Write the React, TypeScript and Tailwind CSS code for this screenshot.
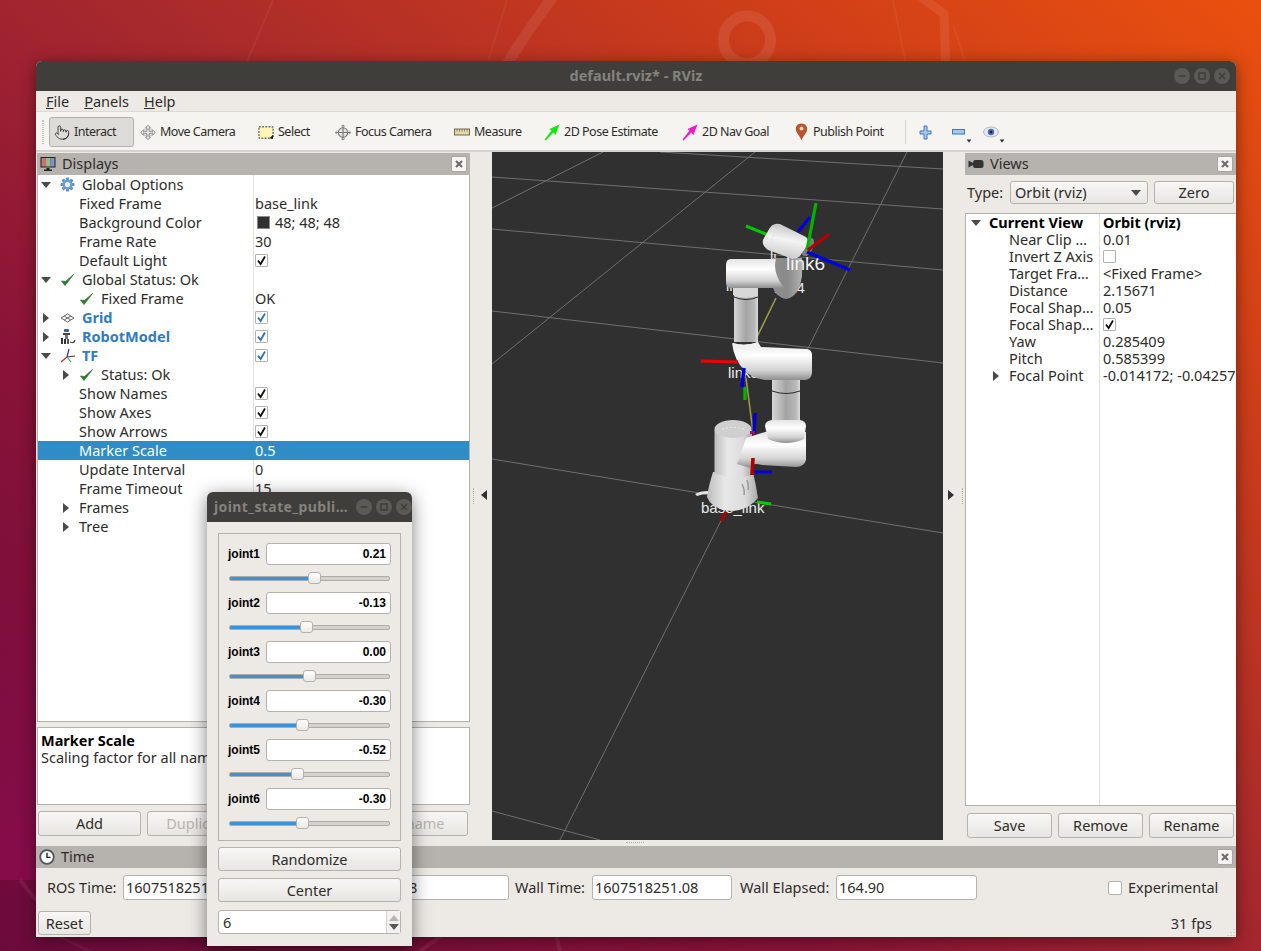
import React from "react";
import { Pointer } from "lucide-react";

type TreeRow = {
  label: string;
  indent: string;
  arrow?: "down" | "right";
  icon?: React.ReactNode;
  value?: string;
  check?: "black" | "blue" | "empty";
  swatch?: boolean;
  blue?: boolean;
  bold?: boolean;
  selected?: boolean;
};

function Tri({ dir, className = "" }: { dir: "down" | "right" | "left" | "up"; className?: string }) {
  const points = { down: "0,2 10,2 5,8", right: "2,0 8,5 2,10", left: "8,0 2,5 8,10", up: "0,8 10,8 5,2" }[dir];
  return (
    <svg width="10" height="10" viewBox="0 0 10 10" className={`shrink-0 ${className}`}>
      <polygon points={points} fill="currentColor" />
    </svg>
  );
}

function GreenTick() {
  return (
    <svg width="15" height="14" viewBox="0 0 15 14" className="shrink-0">
      <path d="M1.5 8 L5 12.5 L13.5 1.5 L5.5 8.5 Z" fill="#2a7a2e" stroke="#2a7a2e" strokeWidth="0.8" strokeLinejoin="round" />
    </svg>
  );
}

function Gear() {
  const teeth = [0, 45, 90, 135];
  return (
    <svg width="15" height="15" viewBox="0 0 15 15" className="shrink-0">
      {teeth.map((a) => (
        <rect key={a} x="6" y="0.5" width="3" height="14" rx="0.8" fill="#5c8fd0" transform={`rotate(${a} 7.5 7.5)`} />
      ))}
      <circle cx="7.5" cy="7.5" r="5" fill="#6d9dd8" />
      <circle cx="7.5" cy="7.5" r="2.6" fill="#e8f0fa" />
    </svg>
  );
}

function GridIcon() {
  return (
    <svg width="15" height="12" viewBox="0 0 15 12" className="shrink-0">
      <path d="M7.5 2 L14 6 L7.5 10 L1 6 Z M4.2 4 L10.8 8 M10.8 4 L4.2 8" fill="none" stroke="#555" strokeWidth="0.9" />
    </svg>
  );
}

function RobotIcon() {
  return (
    <svg width="16" height="17" viewBox="0 0 16 17" className="shrink-0">
      <rect x="4" y="1" width="5" height="3" rx="1" fill="#3f5f9a" />
      <rect x="3" y="5" width="7" height="2" fill="#444" />
      <rect x="5" y="7" width="3" height="4" fill="#777" />
      <rect x="1" y="10" width="2" height="6" fill="#333" />
      <rect x="4" y="11" width="2" height="5" fill="#333" />
      <rect x="7" y="11" width="2" height="5" fill="#555" />
      <path d="M10 14 Q14 16 15 12" fill="none" stroke="#444" strokeWidth="1.2" />
    </svg>
  );
}

function TfIcon() {
  return (
    <svg width="16" height="16" viewBox="0 0 16 16" className="shrink-0">
      <path d="M7 9 L9 1" stroke="#2030c8" strokeWidth="1.2" />
      <path d="M7 9 L1 14" stroke="#e02020" strokeWidth="1.2" />
      <path d="M7 9 L15 8" stroke="#333" strokeWidth="1" />
      <path d="M7 9 L11 14" stroke="#20b030" strokeWidth="1.2" />
    </svg>
  );
}

const displayRows: TreeRow[] = [
  { label: "Global Options", indent: "pl-[3px]", arrow: "down", icon: <Gear /> },
  { label: "Fixed Frame", indent: "pl-[41px]", value: "base_link" },
  { label: "Background Color", indent: "pl-[41px]", value: "48; 48; 48", swatch: true },
  { label: "Frame Rate", indent: "pl-[41px]", value: "30" },
  { label: "Default Light", indent: "pl-[41px]", check: "black" },
  { label: "Global Status: Ok", indent: "pl-[3px]", arrow: "down", icon: <GreenTick /> },
  { label: "Fixed Frame", indent: "pl-[41px]", icon: <GreenTick />, value: "OK" },
  { label: "Grid", indent: "pl-[3px]", arrow: "right", icon: <GridIcon />, check: "blue", blue: true },
  { label: "RobotModel", indent: "pl-[3px]", arrow: "right", icon: <RobotIcon />, check: "blue", blue: true },
  { label: "TF", indent: "pl-[3px]", arrow: "down", icon: <TfIcon />, check: "blue", blue: true },
  { label: "Status: Ok", indent: "pl-[23px]", arrow: "right", icon: <GreenTick /> },
  { label: "Show Names", indent: "pl-[41px]", check: "black" },
  { label: "Show Axes", indent: "pl-[41px]", check: "black" },
  { label: "Show Arrows", indent: "pl-[41px]", check: "black" },
  { label: "Marker Scale", indent: "pl-[41px]", value: "0.5", selected: true },
  { label: "Update Interval", indent: "pl-[41px]", value: "0" },
  { label: "Frame Timeout", indent: "pl-[41px]", value: "15" },
  { label: "Frames", indent: "pl-[23px]", arrow: "right" },
  { label: "Tree", indent: "pl-[23px]", arrow: "right" },
];

const viewRows: TreeRow[] = [
  { label: "Current View", indent: "pl-[5px]", arrow: "down", value: "Orbit (rviz)", bold: true },
  { label: "Near Clip …", indent: "pl-[43px]", value: "0.01" },
  { label: "Invert Z Axis", indent: "pl-[43px]", check: "empty" },
  { label: "Target Fra…", indent: "pl-[43px]", value: "<Fixed Frame>" },
  { label: "Distance", indent: "pl-[43px]", value: "2.15671" },
  { label: "Focal Shap…", indent: "pl-[43px]", value: "0.05" },
  { label: "Focal Shap…", indent: "pl-[43px]", check: "black" },
  { label: "Yaw", indent: "pl-[43px]", value: "0.285409" },
  { label: "Pitch", indent: "pl-[43px]", value: "0.585399" },
  { label: "Focal Point", indent: "pl-[25px]", arrow: "right", value: "-0.014172; -0.04257" },
];

function CheckBox({ kind }: { kind: "black" | "blue" | "empty" }) {
  return (
    <span className="flex h-[13px] w-[13px] shrink-0 items-center justify-center rounded-[1px] border border-[#b5b2ad] bg-white">
      {kind !== "empty" && (
        <svg width="11" height="11" viewBox="0 0 11 11">
          <path d="M2 5.5 L4.6 9 L9 1.5" fill="none" stroke={kind === "blue" ? "#2a74ba" : "#111"} strokeWidth="1.8" />
        </svg>
      )}
    </span>
  );
}

function TreeLine({ row, height, leftWidth, valuePad, textPad = "" }: { row: TreeRow; height: string; leftWidth: string; valuePad: string; textPad?: string }) {
  const rowColor = row.selected ? "bg-[#308cc6] text-white" : "text-[#2e2c29]";
  const weight = row.bold ? "font-bold text-black" : "";
  const lineColor = row.selected ? "border-[#308cc6]" : "border-[#e3e1de]";
  return (
    <div className={`flex shrink-0 items-center ${height} ${rowColor}`}>
      <div className={`flex h-full shrink-0 items-center whitespace-nowrap border-r ${lineColor} ${leftWidth} ${row.indent}`}>
        {row.arrow && (
          <span className="mr-[8px] text-[#4a4a48]">
            <Tri dir={row.arrow} />
          </span>
        )}
        {row.icon && <span className={`flex w-[15px] shrink-0 justify-center ${row.indent === "pl-[3px]" ? "ml-[1px]" : ""}`}>{row.icon}</span>}
        <span className={`${textPad} ${row.icon ? "ml-[7px]" : ""} ${row.blue ? "font-bold text-[#2f7bc8]" : ""} ${weight}`}>{row.label}</span>
      </div>
      <div className={`flex min-w-0 items-center whitespace-nowrap ${valuePad} ${weight}`}>
        {row.swatch && <span className="ml-[2px] mr-[5px] h-[13px] w-[13px] shrink-0 border border-[#8a8a8a] bg-[#303030]" />}
        {row.check && <CheckBox kind={row.check} />}
        {row.value && <span className={textPad}>{row.value}</span>}
      </div>
    </div>
  );
}

function CloseBtn() {
  return (
    <span className="flex h-[16px] w-[16px] items-center justify-center rounded-[2px] border border-[#a9a6a1] bg-[#f6f5f3]">
      <svg width="8" height="8" viewBox="0 0 8 8">
        <path d="M1 1 L7 7 M7 1 L1 7" stroke="#6f6d6a" strokeWidth="2.2" />
      </svg>
    </span>
  );
}

function DockTitle({ icon, title }: { icon: React.ReactNode; title: string }) {
  return (
    <div className="flex h-[22px] shrink-0 items-center bg-[#b6b2ae] pl-[3px] pr-[3px] text-[#2e2c29]">
      <span className="flex w-[16px] shrink-0 justify-center">{icon}</span>
      <span className="ml-[6px] pb-[2px]">{title}</span>
      <span className="ml-auto">
        <CloseBtn />
      </span>
    </div>
  );
}

function QtButton({ children, className = "", disabled = false }: { children?: React.ReactNode; className?: string; disabled?: boolean }) {
  return (
    <div
      className={`flex items-center justify-center rounded-[3px] border border-[#b5b1ac] bg-gradient-to-b from-[#f8f7f5] to-[#e8e6e2] ${disabled ? "text-[#b8b5b0]" : "text-[#2e2c29]"} ${className}`}
    >
      {children}
    </div>
  );
}

function TimeField({ value, className = "" }: { value: string; className?: string }) {
  return <div className={`flex h-[25px] w-[140px] shrink-0 items-center overflow-hidden rounded-[3px] border border-[#b5b1ac] bg-white pl-[2px] ${className}`}>{value}</div>;
}

function ToolBtn({ icon, label, width, active = false }: { icon: React.ReactNode; label: string; width: string; active?: boolean }) {
  return (
    <div
      className={`flex h-[30px] shrink-0 items-center gap-[4px] whitespace-nowrap rounded-[3px] ${width} ${active ? "border border-[#b3b0ab] bg-[#dedcd8] pl-[4px]" : "pl-[6px]"}`}
    >
      <span className="flex w-[16px] shrink-0 justify-center">{icon}</span>
      {label}
    </div>
  );
}

function WinButtons({ className = "" }: { className?: string }) {
  return (
    <div className={`flex gap-[4px] ${className}`}>
      {["M4.5 8 H11.5", "M5 5 H11 V11 H5 Z", "M5 5 L11 11 M11 5 L5 11"].map((d) => (
        <svg key={d} width="16" height="16" viewBox="0 0 16 16">
          <circle cx="8" cy="8" r="8" fill="#5b5a55" />
          <path d={d} fill="none" stroke="#3d3c38" strokeWidth="1.3" />
        </svg>
      ))}
    </div>
  );
}

function MoveCamIcon() {
  return (
    <svg width="17" height="17" viewBox="0 0 17 17">
      <path
        d="M8.5 0.8 L11 3.5 H9.7 V7.3 H13.5 V6 L16.2 8.5 L13.5 11 V9.7 H9.7 V13.5 H11 L8.5 16.2 L6 13.5 H7.3 V9.7 H3.5 V11 L0.8 8.5 L3.5 6 V7.3 H7.3 V3.5 H6 Z"
        fill="#f2f1ef"
        stroke="#777"
        strokeWidth="0.9"
      />
      <path d="M4 5 H13 V12 H4 Z" fill="none" stroke="#999" strokeWidth="0.6" />
    </svg>
  );
}

function SelectIcon() {
  return (
    <svg width="17" height="15" viewBox="0 0 17 15">
      <rect x="1" y="1.5" width="15" height="12" fill="#fdf6b4" stroke="#222" strokeWidth="1" strokeDasharray="2 1.4" />
      <path d="M16 10 V14 H12 Z" fill="#111" />
    </svg>
  );
}

function FocusIcon() {
  return (
    <svg width="17" height="17" viewBox="0 0 17 17">
      <circle cx="8.5" cy="8.5" r="5" fill="#e6e4e1" stroke="#777" strokeWidth="1.1" />
      <path d="M8.5 0.5 V16.5 M0.5 8.5 H16.5" stroke="#777" strokeWidth="1.2" />
      <path d="M6.5 2 L8.5 0.4 L10.5 2 M6.5 15 L8.5 16.6 L10.5 15 M2 6.5 L0.4 8.5 L2 10.5 M15 6.5 L16.6 8.5 L15 10.5" fill="none" stroke="#888" strokeWidth="0.9" />
    </svg>
  );
}

function RulerIcon() {
  return (
    <svg width="16" height="8" viewBox="0 0 16 8">
      <rect x="0.5" y="1" width="15" height="6" fill="#e4d8a0" stroke="#6e6a58" strokeWidth="1" />
      <path d="M3 1 V3.5 M5.5 1 V3.5 M8 1 V3.5 M10.5 1 V3.5 M13 1 V3.5" stroke="#6e6a58" strokeWidth="0.7" />
    </svg>
  );
}

function ArrowGoal({ color }: { color: string }) {
  return (
    <svg width="16" height="17" viewBox="0 0 16 17">
      <path d="M15.5 0.5 L11.5 11 L9.5 8.5 L1.5 16.5 L0.5 15.5 L7.5 6.8 L5.5 5 Z" fill={color} />
    </svg>
  );
}

function PinIcon() {
  return (
    <svg width="13" height="18" viewBox="0 0 13 18">
      <path d="M6.5 0.5 C2.5 0.5 0.8 3.5 0.8 6 C0.8 9.5 5 13 6.5 17.5 C8 13 12.2 9.5 12.2 6 C12.2 3.5 10.5 0.5 6.5 0.5 Z" fill="#b8552e" />
      <circle cx="6.5" cy="5.5" r="2" fill="#f0d8c8" />
    </svg>
  );
}

function Slider({ pos, fill }: { pos: number; fill: number }) {
  return (
    <div className="relative ml-[10px] mt-[7px] mb-[7px] flex h-[13px] w-[161px] items-center">
      <div className="h-[5px] w-full overflow-hidden rounded-[2px] border border-[#aeaaa5] bg-[#d5d2cd]">
        <div className="h-full bg-[#3a92d8]" style={{ width: `${fill}px` }} />
      </div>
      <div
        className="absolute top-0 h-[12px] w-[13px] rounded-[3px] border border-[#b5b1ac] bg-gradient-to-b from-white to-[#ebe9e6]"
        style={{ left: `${pos}px` }}
      />
    </div>
  );
}

const joints = [
  { name: "joint1", value: "0.21", pos: 79 },
  { name: "joint2", value: "-0.13", pos: 71 },
  { name: "joint3", value: "0.00", pos: 74 },
  { name: "joint4", value: "-0.30", pos: 67 },
  { name: "joint5", value: "-0.52", pos: 62 },
  { name: "joint6", value: "-0.30", pos: 67 },
];

function JointWindow() {
  return (
    <div className="absolute left-[207px] top-[492px] flex h-[454px] w-[205px] flex-col overflow-hidden rounded-t-[6px] bg-[#edeae6] shadow-[0_4px_18px_rgba(0,0,0,0.5)]">
      <div className="flex h-[30px] shrink-0 items-center bg-[#3f3e3a] pl-[7px]">
        <span className="w-[143px] whitespace-nowrap text-[14px] font-bold tracking-[0.4px] text-[#84837d]">joint_state_publi…</span>
        <WinButtons />
      </div>
      <div className="mx-[11px] mt-[11px] flex h-[308px] flex-col border border-[#b5b1ac] pt-[9px]">
        {joints.map((j) => (
          <div key={j.name}>
            <div className="flex h-[22px] items-center">
              <span className="ml-[9px] w-[38px] font-['Liberation_Sans',sans-serif] text-[12px] font-bold text-black">{j.name}</span>
              <span className="flex h-[22px] w-[125px] items-center justify-end rounded-[3px] border border-[#b5b1ac] bg-white pr-[4px] font-['Liberation_Sans',sans-serif] text-[12px] font-bold text-black">
                {j.value}
              </span>
            </div>
            <Slider pos={j.pos} fill={j.pos + 4} />
          </div>
        ))}
      </div>
      <QtButton className="mx-[11px] mt-[6px] h-[24px] shrink-0">Randomize</QtButton>
      <QtButton className="mx-[11px] mt-[7px] h-[24px] shrink-0">Center</QtButton>
      <div className="mx-[11px] mt-[8px] flex h-[24px] shrink-0 items-center rounded-[3px] border border-[#b5b1ac] bg-white pl-[4px]">
        <span>6</span>
        <div className="ml-auto flex h-full w-[14px] flex-col items-center justify-center border-l border-[#d5d2cd] bg-[#f3f2f0]">
          <Tri dir="up" className="text-[#b8b5b0]" />
          <Tri dir="down" className="-mt-[1px] text-[#5a5855]" />
        </div>
      </div>
    </div>
  );
}

function RobotView() {
  const labelFont = "Liberation Sans, sans-serif";
  return (
    <svg viewBox="0 0 451 688" className="h-full w-full">
      <defs>
        <linearGradient id="hz" x1="0" y1="0" x2="0" y2="1">
          <stop offset="0" stopColor="#e4e4e4" />
          <stop offset="0.35" stopColor="#ffffff" />
          <stop offset="0.75" stopColor="#d2d2d2" />
          <stop offset="1" stopColor="#8f8f8f" />
        </linearGradient>
        <linearGradient id="vt" x1="0" y1="0" x2="1" y2="0">
          <stop offset="0" stopColor="#d6d6d6" />
          <stop offset="0.5" stopColor="#a4a4a4" />
          <stop offset="0.85" stopColor="#b8b8b8" />
          <stop offset="1" stopColor="#dcdcdc" />
        </linearGradient>
        <linearGradient id="bs" x1="0" y1="0" x2="1" y2="0">
          <stop offset="0" stopColor="#bcbcbc" />
          <stop offset="0.35" stopColor="#e8e8e8" />
          <stop offset="0.75" stopColor="#dcdcdc" />
          <stop offset="1" stopColor="#a8a8a8" />
        </linearGradient>
        <linearGradient id="dk" x1="0" y1="0" x2="1" y2="0">
          <stop offset="0" stopColor="#8d8d8d" />
          <stop offset="0.5" stopColor="#8a8a8a" />
          <stop offset="1" stopColor="#b0b0b0" />
        </linearGradient>
        <linearGradient id="l6" x1="0.62" y1="0" x2="0.38" y2="1">
          <stop offset="0" stopColor="#bdbdbd" />
          <stop offset="0.45" stopColor="#f4f4f4" />
          <stop offset="1" stopColor="#c8c8c8" />
        </linearGradient>
      </defs>
      <g transform="translate(-492 -152)">
        <g stroke="#6f6f6f" strokeWidth="1" fill="none">
          <path d="M492 177 L943 209 M492 229 L943 270 M492 311 L943 363 M492 459 L943 533 M492 811 L600 840 M660 152 L943 169" />
          <path d="M603 152 L492 208 M755 152 L492 364 M907 152 L560 840" />
        </g>
        <path d="M776 298 L757 337 M746 378 L753 432" stroke="#9c9a48" strokeWidth="1.6" />

        <g fontFamily={labelFont} fontSize="15" fill="#ececec">
          <text x="701" y="513">base_link</text>
          <text x="728" y="378">link3</text>
          <text x="726" y="291">link5</text>
          <text x="774" y="293">link4</text>
        </g>

        {/* base */}
        <path d="M713 472 Q708 488 707 497 Q712 510 733 511 Q748 510 758 498 Q756 485 753 472 Z" fill="url(#bs)" />
        <path d="M695 494 Q700 491 708 491 L708 494 Q702 494 697 496 Z" fill="#e2e2e2" />
        <path d="M714.5 430 H752 V475 Q734 481 714.5 473 Z" fill="url(#bs)" />
        <path d="M742 484 Q745 490 744 495 M747 480 Q749 486 748 490" stroke="#9a9a9a" strokeWidth="1.5" fill="none" />

        {/* lower link */}
        <path d="M746 438 L765 432 H806 V460 Q804 467 796 467 L762 465 Q752 462 750 468 L737 464 Z" fill="url(#hz)" />
        <ellipse cx="733" cy="429" rx="18.5" ry="9" fill="#cfcfcf" />
        <path d="M722 429 Q733 426 744 429" stroke="#ededed" strokeWidth="1" fill="none" strokeDasharray="2 2" />
        <rect x="772" y="378" width="28" height="44" fill="url(#vt)" />
        <path d="M772 391 Q786 396 800 391" stroke="#2a2a2a" strokeWidth="1" fill="none" />
        <path d="M765 426 Q765 421 772 420 H800 Q806 421 806 426 L804 439 Q786 447 768 439 Z" fill="url(#hz)" />

        {/* elbow */}
        <path d="M732 343 Q745 347 758 342 L761 347 L807 349 Q812 350 812 355 V373 Q811 380 805 380 H765 Q752 378 745 371 Q734 360 732 343 Z" fill="url(#hz)" />
        <rect x="734" y="295" width="24" height="47" fill="url(#vt)" />
        <path d="M733 343 Q745 347 758 342 V346 Q745 351 733 347 Z" fill="#f0f0f0" />

        {/* upper link */}
        <text x="770" y="262" fontFamily={labelFont} fontSize="15" fill="#ececec">li</text>
        <path d="M773 258 H802 V276 Q799 297 786 299 Q776 297 773 288 Z" fill="url(#dk)" />
        <text x="786" y="270" fontFamily={labelFont} fontSize="19" fill="#f2f2f2">link6</text>
        <path d="M731 259 H776 Q772 272 784 288 L744 288 H732 Q726 288 726 282 V265 Q726 259 731 259 Z" fill="url(#hz)" />
        <path d="M733 288 H758 V295 Q746 301 733 295 Z" fill="#d8d8d8" />
        <path d="M734 297 Q746 302 758 297" stroke="#2a2a2a" strokeWidth="1" fill="none" />

        {/* axes behind the tool */}
        <path d="M746 226 L768 235" stroke="#00c800" strokeWidth="3.2" />
        <path d="M810 217 L798 232" stroke="#0000e0" strokeWidth="3.2" />

        {/* link6 */}
        <ellipse cx="808" cy="247" rx="5" ry="10" fill="#7c7c7c" transform="rotate(25 808 247)" />
        <path d="M768 231 Q772 222 780 224 L806 237 Q810 240 806 247 L800 256 Q796 260 790 258 L768 250 Q760 244 764 238 Z" fill="url(#l6)" />
        <path d="M775 232 L770 244" stroke="#dcdcdc" strokeWidth="0.8" strokeDasharray="2 1.5" />

        <path d="M816 203 L807 250" stroke="#00b400" strokeWidth="3.2" />
        <path d="M829 234 L808 250" stroke="#b80000" strokeWidth="3.2" />
        <path d="M807 252 L850 270" stroke="#0000e0" strokeWidth="3.4" />

        <path d="M701 361 L738 362" stroke="#f00000" strokeWidth="3.2" />
        <path d="M745 387 V400" stroke="#00b400" strokeWidth="3.4" />
        <path d="M744 368 L742 387" stroke="#0000d0" strokeWidth="3.6" />
        <path d="M755 413 L754 433" stroke="#0000d0" strokeWidth="3.6" />
        <rect x="750" y="431" width="5" height="3" fill="#a0106a" />
        <path d="M754 472 H772" stroke="#0000e0" strokeWidth="3" />
        <path d="M753 458 L752 475" stroke="#b00000" strokeWidth="3.6" />
        <path d="M757 502 L771 504" stroke="#00d000" strokeWidth="3" />
        <path d="M726 512 L721 521" stroke="#b00000" strokeWidth="3.2" />
      </g>
    </svg>
  );
}

function Wallpaper() {
  return (
    <svg className="absolute inset-0" width="1261" height="951" viewBox="0 0 1261 951" fill="none">
      <defs>
        <linearGradient id="mg" x1="0" y1="0" x2="0" y2="1">
          <stop offset="0" stopColor="#9c0c58" stopOpacity="0" />
          <stop offset="1" stopColor="#9c0c58" stopOpacity="0.5" />
        </linearGradient>
      </defs>
      <rect x="0" y="560" width="40" height="320" fill="url(#mg)" />
      <ellipse cx="747" cy="40" rx="23.5" ry="24" stroke="#ffffff" strokeOpacity="0.09" strokeWidth="11" />
      <path d="M555 -6 Q505 60 470 130" stroke="#ffffff" strokeOpacity="0.08" strokeWidth="11" />
      <path d="M920 -4 L944 14 L948 130" stroke="#ffffff" strokeOpacity="0.08" strokeWidth="9" />
      <path d="M273 0 L235 90 M507 0 L470 120 M893 0 L915 110 M953 25 L985 120" stroke="#ffffff" strokeOpacity="0.05" strokeWidth="2" />
      <path d="M20 880 L36 900 M420 951 L450 930 M560 951 L555 930" stroke="#ffffff" strokeOpacity="0.07" strokeWidth="4" />
      <path d="M60 937 L90 951" stroke="#ffffff" strokeOpacity="0.05" strokeWidth="3" />
    </svg>
  );
}

function SplitDots({ className = "" }: { className?: string }) {
  return <span className={`absolute w-px border-l border-dotted border-[#b5b1ac] ${className}`} />;
}

export default function App() {
  return (
    <div className="relative h-[951px] w-[1261px] overflow-hidden bg-[linear-gradient(38deg,#6c0a3c_0%,#8a1338_32%,#a92a2c_55%,#c83a1c_75%,#ea500e_100%)] font-['Noto_Sans',sans-serif] text-[14.5px] leading-none text-[#2e2c29]">
      <Wallpaper />

      <div className="absolute left-[36px] top-[61px] flex h-[876px] w-[1200px] flex-col overflow-hidden rounded-t-[6px] bg-[#edeae6] shadow-[0_3px_16px_rgba(0,0,0,0.45)]">
        <div className="relative flex h-[30px] shrink-0 items-center justify-center bg-[#3f3e3a]">
          <span className="pb-[1px] text-[14.5px] font-bold text-[#84837d]">default.rviz* - RViz</span>
          <WinButtons className="absolute right-[6px] top-[7px]" />
        </div>

        <div className="flex h-[21px] shrink-0 items-center gap-[15px] border-b border-[#dcd9d4] pl-[10px]">
          <span>
            <span className="underline">F</span>ile
          </span>
          <span>
            <span className="underline">P</span>anels
          </span>
          <span>
            <span className="underline">H</span>elp
          </span>
        </div>

        <div className="flex h-[40px] shrink-0 items-center border-b-2 border-[#d6d3ce] bg-[#f5f4f1] pl-[6px] pt-[2px] text-[12.5px] tracking-[-0.5px]">
          <div className="mr-[5px] h-[24px] w-[2px] border-x border-dotted border-[#c5c2bd]" />
          <ToolBtn active width="w-[85px]" label="Interact" icon={<Pointer size={17} strokeWidth={1.2} color="#222" />} />
          <ToolBtn width="w-[118px]" label="Move Camera" icon={<MoveCamIcon />} />
          <ToolBtn width="w-[77px]" label="Select" icon={<SelectIcon />} />
          <ToolBtn width="w-[119px]" label="Focus Camera" icon={<FocusIcon />} />
          <ToolBtn width="w-[90px]" label="Measure" icon={<RulerIcon />} />
          <ToolBtn width="w-[138px]" label="2D Pose Estimate" icon={<ArrowGoal color="#14e614" />} />
          <ToolBtn width="w-[111px]" label="2D Nav Goal" icon={<ArrowGoal color="#f01ac8" />} />
          <ToolBtn width="w-[118px]" label="Publish Point" icon={<PinIcon />} />
          <div className="h-[24px] w-px bg-[#d6d3ce]" />
          <div className="ml-[13px] flex items-center">
            <svg width="13" height="15" viewBox="0 0 13 15">
              <path d="M5 1 H8 V6 H12 V9 H8 V14 H5 V9 H1 V6 H5 Z" fill="#a8c8ec" stroke="#3a78bc" strokeWidth="1" />
            </svg>
            <div className="relative ml-[20px]">
              <svg width="13" height="6" viewBox="0 0 13 6">
                <rect x="0.5" y="0.5" width="12" height="4.5" fill="#a8c8ec" stroke="#3a78bc" strokeWidth="1" />
              </svg>
              <Tri dir="down" className="absolute -bottom-[11px] left-[12px] scale-50 text-[#333]" />
            </div>
            <div className="relative ml-[18px]">
              <svg width="16" height="12" viewBox="0 0 16 12">
                <ellipse cx="8" cy="6" rx="7.5" ry="5" fill="#e6eaf2" stroke="#9aa8c0" strokeWidth="0.8" />
                <circle cx="8" cy="6" r="3.2" fill="#4a6cb0" />
                <circle cx="8" cy="6" r="1.2" fill="#10204a" />
              </svg>
              <Tri dir="down" className="absolute -bottom-[8px] left-[14px] scale-50 text-[#333]" />
            </div>
          </div>
        </div>

        <div className="flex h-[692px] shrink-0">
          <div className="flex w-[434px] shrink-0 flex-col pl-px pt-px">
            <DockTitle
              title="Displays"
              icon={
                <svg width="16" height="16" viewBox="0 0 16 16">
                  <rect x="0.5" y="1" width="15" height="10.5" fill="#222" />
                  <rect x="1.5" y="2" width="4.4" height="8.5" fill="#d07070" />
                  <rect x="5.9" y="2" width="4.3" height="8.5" fill="#8fc080" />
                  <rect x="10.2" y="2" width="4.3" height="8.5" fill="#8090c8" />
                  <path d="M6.5 12 H9.5 V13.5 H12 V15 H4 V13.5 H6.5 Z" fill="#222" />
                </svg>
              }
            />
            <div className="flex h-[547px] shrink-0 flex-col overflow-hidden border-x border-b border-[#b5b1ac] bg-white">
              {displayRows.map((row, i) => (
                <TreeLine key={i} row={row} height="h-[19px]" leftWidth="w-[216px]" valuePad="pl-[1px]" textPad="pb-[1px]" />
              ))}
              <div className="ml-[215px] flex-1 border-l border-[#e3e1de]" />
            </div>
            <div className="mt-[5px] h-[78px] shrink-0 overflow-hidden whitespace-nowrap border border-[#b5b1ac] bg-white pl-[3px] pt-[4px] leading-[17px]">
              <div className="font-bold text-black">Marker Scale</div>
              <div>Scaling factor for all names, axes and arrows.</div>
            </div>
            <div className="mt-[6px] flex gap-[6px] pl-px">
              <QtButton className="h-[25px] w-[103px]">Add</QtButton>
              <QtButton disabled className="h-[25px] w-[103px]">Duplicate</QtButton>
              <QtButton disabled className="h-[25px] w-[103px]" />
              <QtButton disabled className="h-[25px] w-[103px]">Rename</QtButton>
            </div>
          </div>

          <div className="relative w-[22px] shrink-0">
            <SplitDots className="left-[3px] top-[336px] h-[16px]" />
            <Tri dir="left" className="absolute left-[9px] top-[338px] text-[#333]" />
          </div>
          <div className="h-[688px] w-[451px] shrink-0 bg-[#303030]">
            <RobotView />
          </div>
          <div className="relative w-[22px] shrink-0">
            <Tri dir="right" className="absolute left-[3px] top-[338px] text-[#333]" />
            <SplitDots className="left-[19px] top-[336px] h-[16px]" />
          </div>

          <div className="flex w-[271px] shrink-0 flex-col pt-px">
            <DockTitle
              title="Views"
              icon={
                <svg width="16" height="10" viewBox="0 0 16 10">
                  <path d="M0.5 1.5 L5 4 V6 L0.5 8.5 Z" fill="#333" />
                  <rect x="5" y="1" width="10.5" height="8" rx="2.5" fill="#333" />
                </svg>
              }
            />
            <div className="mt-[6px] flex h-[23px] shrink-0 items-center pl-[2px]">
              <span className="w-[43px]">Type:</span>
              <QtButton className="h-[23px] w-[138px] !justify-start pl-[4px] pr-[6px]">
                Orbit (rviz)
                <Tri dir="down" className="ml-auto text-[#4a4a48]" />
              </QtButton>
              <QtButton className="ml-[6px] h-[23px] w-[80px]">Zero</QtButton>
            </div>
            <div className="mt-[9px] flex h-[593px] shrink-0 flex-col overflow-hidden border-y border-l border-[#b5b1ac] bg-white">
              {viewRows.map((row, i) => (
                <TreeLine key={i} row={row} height="h-[17px]" leftWidth="w-[134px]" valuePad="pl-[3px]" />
              ))}
              <div className="ml-[133px] flex-1 border-l border-[#e3e1de]" />
            </div>
            <div className="mt-[7px] flex gap-[6px] pl-[2px]">
              <QtButton className="h-[25px] w-[85px]">Save</QtButton>
              <QtButton className="h-[25px] w-[85px]">Remove</QtButton>
              <QtButton className="h-[25px] w-[85px]">Rename</QtButton>
            </div>
          </div>
        </div>

        <div className="relative mt-[2px] flex flex-1 flex-col">
          <span className="absolute left-[590px] -top-[4px] h-px w-[18px] border-t border-dotted border-[#b5b1ac]" />
          <DockTitle
            title="Time"
            icon={
              <svg width="16" height="16" viewBox="0 0 16 16">
                <circle cx="8" cy="8" r="6.8" fill="#fff" stroke="#555" strokeWidth="1.8" />
                <path d="M8 3.8 V8.4 H11.6" fill="none" stroke="#222" strokeWidth="1.4" />
              </svg>
            }
          />
          <div className="mt-[7px] flex items-center whitespace-nowrap pl-[11px]">
            <span className="w-[76px] shrink-0">ROS Time:</span>
            <TimeField value="1607518251.08" />
            <span className="ml-[8px] w-[98px] shrink-0" />
            <TimeField value="164.88" />
            <span className="ml-[6px] w-[77px] shrink-0">Wall Time:</span>
            <TimeField value="1607518251.08" />
            <span className="ml-[8px] w-[96px] shrink-0">Wall Elapsed:</span>
            <TimeField value="164.90" className="!w-[141px]" />
            <span className="ml-[131px] h-[14px] w-[14px] shrink-0 rounded-[2px] border border-[#b5b2ad] bg-white" />
            <span className="ml-[6px]">Experimental</span>
          </div>
          <div className="mt-[11px] flex items-center pl-[2px] pr-[24px]">
            <QtButton className="h-[24px] w-[53px]">Reset</QtButton>
            <span className="ml-auto">31 fps</span>
          </div>
          <svg width="10" height="10" viewBox="0 0 10 10" className="absolute bottom-0 right-0">
            <path d="M8 2 V3 M5 5 V6 M8 5 V6 M2 8 V9 M5 8 V9 M8 8 V9" stroke="#b5b1ac" strokeWidth="1" />
          </svg>
        </div>
      </div>

      <JointWindow />
    </div>
  );
}
